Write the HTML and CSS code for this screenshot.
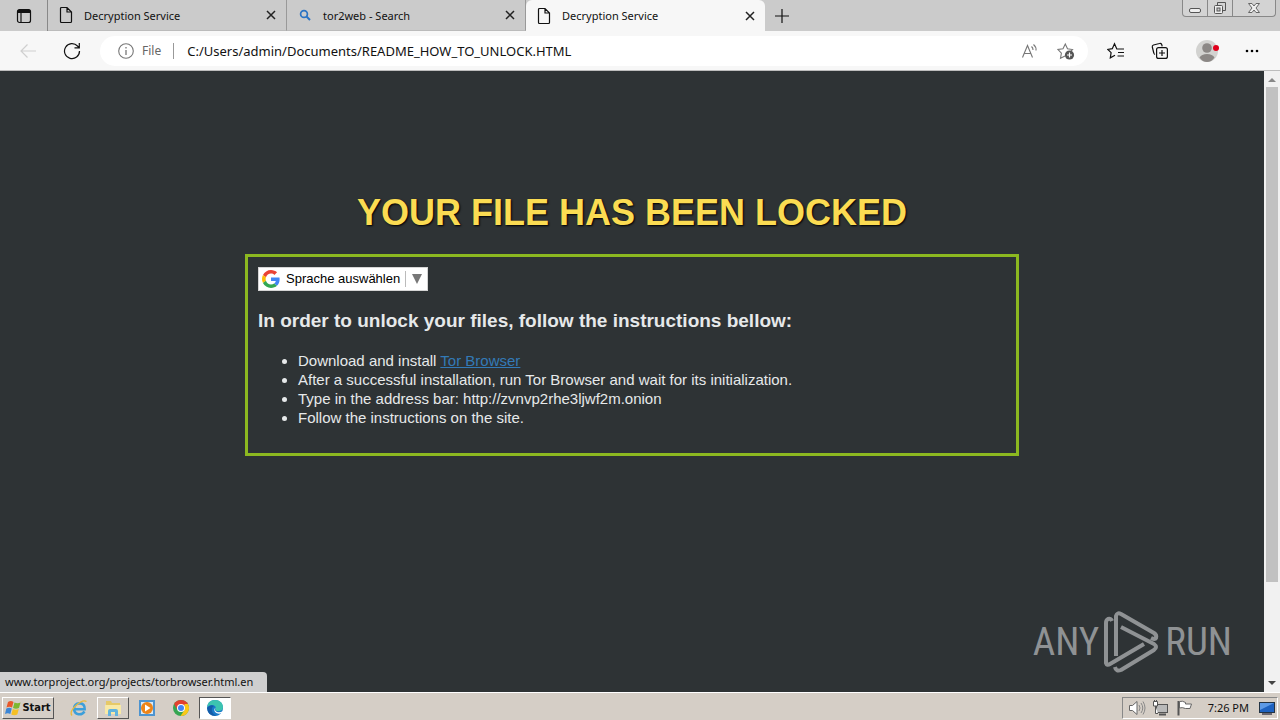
FILE: index.html
```html
<!DOCTYPE html>
<html lang="en">
<head>
<meta charset="utf-8">
<title>Decryption Service</title>
<link rel="stylesheet" href="styles.css">
</head>
<body>
<header class="tabstrip">
  <button class="tab-actions" aria-label="Tab actions">
    <svg width="16" height="16" viewBox="0 0 16 16"><rect x="1.500" y="1.500" width="13" height="13" rx="2" fill="none" stroke="#111" stroke-width="1.200"/><path d="M1.500 5V3.500a2 2 0 0 1 2-2h9a2 2 0 0 1 2 2V5z" fill="#111"/><path d="M5 5v9.500" stroke="#111" stroke-width="1.200"/></svg>
  </button>
  <div class="tab">
    <svg class="tab-icon" width="14" height="18" viewBox="0 0 14 18"><path d="M1.500 2.500a1 1 0 0 1 1-1H8L12.500 6v9.500a1 1 0 0 1-1 1h-9a1 1 0 0 1-1-1zM8 1.500V6h4.500" fill="none" stroke="#111" stroke-width="1.200"/></svg>
    <span class="tab-title">Decryption Service</span>
    <button class="close" aria-label="Close tab"><svg width="10" height="10" viewBox="0 0 10 10"><path d="M1 1l8 8M9 1L1 9" stroke="#222" stroke-width="1.500"/></svg></button>
  </div>
  <div class="tab">
    <svg class="tab-icon" width="14" height="18" viewBox="0 0 14 18"><circle cx="6" cy="8" r="3.400" fill="none" stroke="#2a73c4" stroke-width="1.700"/><path d="M8.500 10.500l3.500 3.500" stroke="#2a73c4" stroke-width="2"/></svg>
    <span class="tab-title">tor2web - Search</span>
    <button class="close" aria-label="Close tab"><svg width="10" height="10" viewBox="0 0 10 10"><path d="M1 1l8 8M9 1L1 9" stroke="#222" stroke-width="1.500"/></svg></button>
  </div>
  <div class="tab active">
    <svg class="tab-icon" width="14" height="18" viewBox="0 0 14 18"><path d="M1.500 2.500a1 1 0 0 1 1-1H8L12.500 6v9.500a1 1 0 0 1-1 1h-9a1 1 0 0 1-1-1zM8 1.500V6h4.500" fill="none" stroke="#111" stroke-width="1.200"/></svg>
    <span class="tab-title">Decryption Service</span>
    <button class="close" aria-label="Close tab"><svg width="10" height="10" viewBox="0 0 10 10"><path d="M1 1l8 8M9 1L1 9" stroke="#222" stroke-width="1.500"/></svg></button>
  </div>
  <button class="new-tab" aria-label="New tab"><svg width="14" height="14" viewBox="0 0 14 14"><path d="M7 0v14M0 7h14" stroke="#111" stroke-width="1.200"/></svg></button>
  <div class="window-controls">
    <button aria-label="Minimize"><svg width="14" height="14" viewBox="0 0 14 14"><rect x="1.500" y="7.500" width="11" height="4" rx="1.500" fill="#eee" stroke="#555"/></svg></button>
    <button aria-label="Restore"><svg width="14" height="14" viewBox="0 0 14 14"><path d="M4.500 4V1.500h8v8H10" fill="none" stroke="#555"/><rect x="1.500" y="4.500" width="8" height="8" rx="1" fill="#eee" stroke="#555"/><rect x="4" y="7" width="3" height="3" fill="#ccc" stroke="#555"/></svg></button>
    <button class="wide" aria-label="Close"><svg width="14" height="14" viewBox="0 0 14 14"><path d="M1.500 2.500h3.500L7 5l2-2.500h3.500L9 7l3.500 4.500H9L7 9l-2 2.500H1.500L5 7z" fill="#eee" stroke="#666"/></svg></button>
  </div>
</header>
<nav class="toolbar">
  <button class="back" aria-label="Back"><svg width="18" height="16" viewBox="0 0 18 16"><path d="M17 8H2M8.500 1.500L2 8l6.500 6.500" fill="none" stroke="#cfcfcf" stroke-width="1.200"/></svg></button>
  <button class="reload" aria-label="Reload"><svg width="18" height="18" viewBox="0 0 18 18"><path d="M16.500 9A7.500 7.500 0 1 1 14.500 4L16 5.500M16.300 1v4.800h-4.800" fill="none" stroke="#111" stroke-width="1.200"/></svg></button>
  <div class="address">
    <svg width="16" height="16" viewBox="0 0 16 16"><circle cx="8" cy="8" r="7.300" fill="none" stroke="#777" stroke-width="1.100"/><path d="M8 7v5M8 4v1.500" stroke="#777" stroke-width="1.300"/></svg>
    <label class="scheme" for="url">File</label>
    <input class="url" id="url" type="text" value="C:/Users/admin/Documents/README_HOW_TO_UNLOCK.HTML">
    <button class="read-aloud" aria-label="Read aloud"><svg width="18" height="18" viewBox="0 0 18 18"><path d="M1.500 15.500L6.500 3.500l5 12M3.300 11.500h6.500M10.500 4.500q1.700 1.500 1.500 3.500M12.500 2.500q3 2.500 2.500 6" fill="none" stroke="#777" stroke-width="1.100"/></svg></button>
    <button aria-label="Add to favorites"><svg width="18" height="18" viewBox="0 0 18 18"><path d="M8 14l-4.500 2.200.9-5L1 7.500l5-.8L8.300 2l2.200 4.700 5 .8-1.500 1.500" fill="none" stroke="#777" stroke-width="1.100"/><circle cx="12.500" cy="13" r="4.600" fill="#555"/><path d="M12.500 10.500v5M10 13h5" stroke="#fff" stroke-width="1.200"/></svg></button>
  </div>
  <div class="tools">
    <button aria-label="Favorites"><svg width="18" height="18" viewBox="0 0 18 18"><path d="M17 7H9.800L7.500 1.800 5.300 6.700l-4.500.7 3.300 3.300-.8 5.100L8 13.300M11 10.500h6M10.500 14H17" fill="none" stroke="#111" stroke-width="1.200"/></svg></button>
    <button aria-label="Collections"><svg width="18" height="18" viewBox="0 0 18 18"><path d="M4 12.500Q3 12 2.800 11L1.300 5Q1 3.500 2.500 3L8.500 1.500Q10 1 10.700 2.500L11.200 4.300" fill="none" stroke="#111" stroke-width="1.200"/><rect x="5.600" y="5.600" width="10.800" height="10.800" rx="2" fill="none" stroke="#111" stroke-width="1.200"/><path d="M11 8v6M8 11h6" stroke="#111" stroke-width="1.200"/></svg></button>
    <button aria-label="Profile"><svg width="24" height="24" viewBox="0 0 24 24"><circle cx="12" cy="12" r="11" fill="#d2d2d0"/><circle cx="12" cy="9" r="4.800" fill="#8b8785"/><path d="M4.500 18.500q2-3.500 7.500-3.500t7.500 3.500q-3 4.500-7.500 4.500t-7.500-4.500z" fill="#8b8785"/><circle cx="21" cy="9" r="3" fill="#e0001b"/></svg></button>
    <button aria-label="Settings and more"><svg width="14" height="4" viewBox="0 0 14 4"><circle cx="2" cy="2" r="1.300"/><circle cx="7" cy="2" r="1.300"/><circle cx="12" cy="2" r="1.300"/></svg></button>
  </div>
</nav>
<div class="viewport">
  <main class="page">
    <h1 class="headline">YOUR FILE HAS BEEN LOCKED</h1>
    <section class="panel">
      <div class="translate">
        <svg width="18" height="18" viewBox="0 0 48 48"><path fill="#ea4335" d="M24 9.500c3.500 0 6.700 1.200 9.200 3.600l6.900-6.900C35.900 2.400 30.500 0 24 0 14.600 0 6.500 5.400 2.600 13.200l8 6.200C12.400 13.700 17.700 9.500 24 9.500z"/><path fill="#4285f4" d="M47 24.600c0-1.600-.2-3.100-.4-4.600H24v9h12.900c-.6 3-2.200 5.500-4.700 7.200l7.700 6C44.400 38 47 32 47 24.600z"/><path fill="#fbbc05" d="M10.500 28.600c-.5-1.500-.8-3-.8-4.600s.3-3.100.8-4.600l-8-6.200C.9 16.500 0 20.100 0 24s.9 7.500 2.600 10.800z"/><path fill="#34a853" d="M24 48c6.500 0 11.900-2.100 15.900-5.800l-7.700-6c-2.200 1.500-4.900 2.300-8.200 2.300-6.300 0-11.600-4.200-13.500-9.900l-8 6.200C6.500 42.600 14.600 48 24 48z"/></svg>
        <select class="language" aria-label="Sprache auswählen"><option>Sprache auswählen</option></select>
        <span class="arrow"><svg width="10" height="10" viewBox="0 0 10 10"><path d="M0 0h10L5 10z" fill="#777"/></svg></span>
      </div>
      <h3 class="lead">In order to unlock your files, follow the instructions bellow:</h3>
      <ul class="steps">
        <li>Download and install <a href="#">Tor Browser</a></li>
        <li>After a successful installation, run Tor Browser and wait for its initialization.</li>
        <li>Type in the address bar: http://zvnvp2rhe3ljwf2m.onion</li>
        <li>Follow the instructions on the site.</li>
      </ul>
    </section>
  </main>
  <div class="scrollbar">
    <svg width="8" height="4" viewBox="0 0 8 4"><path d="M0 4h8L4 0z" fill="#888"/></svg>
    <div class="track"><div class="thumb"></div></div>
    <svg width="8" height="4" viewBox="0 0 8 4"><path d="M0 0h8L4 4z" fill="#444"/></svg>
  </div>
  <div class="status">www.torproject.org/projects/torbrowser.html.en</div>
  <div class="watermark">
    <span>ANY</span>
    <svg width="56" height="64" viewBox="0 0 56 64"><g fill="none" stroke="#8f9294" stroke-width="4" stroke-linejoin="round"><path d="M8 11Q7 8 4 9 2 10 2 13V53Q3 56 6 54L40 34"/><path d="M12 46V6Q13 2 17 4L50 23Q53 25 52 28 51 30 47 28"/><path d="M17 17L50 34Q54 37 50 40L17 60Q12 62 11 57"/></g></svg>
    <span>RUN</span>
  </div>
</div>
<footer class="taskbar">
  <button class="start"><svg width="17" height="16" viewBox="0 0 17 16"><path d="M3 2q3-2 5.500 0L7 7.500Q4.500 6 1.500 7.500z" fill="#e8582a"/><path d="M9.500 2.500q3 1.500 6 0L14 8q-3 1.500-6 0z" fill="#7db72f"/><path d="M1.300 8.500q3-1.500 5.500 0L5.300 14q-2.500-1.500-5.300 0z" fill="#3c86d6"/><path d="M7.800 9q3 1.500 6 0l-1.500 5.500q-3 1.500-6 0z" fill="#f5c024"/></svg>Start</button>
  <div class="apps">
    <button aria-label="Internet Explorer"><svg width="18" height="18" viewBox="0 0 18 18"><path d="M14.500 12.500Q12 16 8.500 15.200 4 14.500 4 9.800 4.200 4.500 9.500 4.200q5.500.3 5.200 6H5" fill="none" stroke="#3c9fda" stroke-width="2.500"/><path d="M2 16.500Q-1 13 6 6.500T16.500 2.500" fill="none" stroke="#e9b93c" stroke-width="1.300"/></svg></button>
    <button class="raised" aria-label="Explorer"><svg width="18" height="18" viewBox="0 0 18 18"><path d="M2 2h5l1 2h8v11H2z" fill="#e6c968"/><path d="M1 6h16v9H1z" fill="#f8e9a6"/><path d="M4 17v-5q0-2 2-2h6q2 0 2 2v5h-3v-4H7v4z" fill="#62b3dd"/></svg></button>
    <button aria-label="Media Player"><svg width="18" height="18" viewBox="0 0 18 18"><rect x="1" y="1" width="16" height="16" fill="#4d94d0"/><rect x="3" y="3" width="12" height="12" fill="#d9eaf7"/><circle cx="9" cy="9" r="6" fill="#ed8418"/><path d="M7 5.500L12.500 9 7 12.500z" fill="#fff"/></svg></button>
    <button aria-label="Chrome"><svg width="18" height="18" viewBox="0 0 18 18"><circle cx="9" cy="9" r="8" fill="#35a552"/><path d="M2.100 5A8 8 0 0 1 15.900 5L9 9 5.500 11z" fill="#e2402f"/><path d="M15.900 5A8 8 0 0 1 8.500 17L12.500 11V5z" fill="#fbc817"/><circle cx="9" cy="9" r="4" fill="#fff"/><circle cx="9" cy="9" r="3" fill="#4285f4"/></svg></button>
    <button class="pressed" aria-label="Edge"><svg width="18" height="18" viewBox="0 0 18 18"><circle cx="9" cy="9" r="8" fill="#1879c9"/><path d="M1.200 8Q2 1 9 1q7.500.3 8 7 0 4-4.500 4-3.500 0-3-2 1-1.500-.5-3Q5.500 4.500 1.200 8z" fill="#3cc4b0"/><path d="M1.100 9Q4 5 8 7 5 8.500 6 12t5 5Q2 17.500 1.100 9z" fill="#145ca8"/><path d="M9.500 8.500q-1.500 3 1.500 4.500 3 1 6-1l-1 2q-4 2-7-1-1.500-2.500.5-4.500z" fill="#fff"/></svg></button>
  </div>
  <div class="tray">
    <svg width="18" height="16" viewBox="0 0 18 16"><path d="M1.500 5.500h3L9 1.500v13l-4.500-4h-3z" fill="#fff" stroke="#666"/><path d="M11 5q2 3 0 6M13 3q3.500 5 0 10M15 1.500q4 6.500 0 13" fill="none" stroke="#888"/></svg>
    <svg width="18" height="16" viewBox="0 0 18 16"><rect x="4.500" y="4.500" width="11" height="8" fill="#b9b9b9" stroke="#555"/><path d="M7 14.500h7" stroke="#555" stroke-width="2"/><path d="M1.500 1.500h4V6h-4zM3.500 6v7.500H6M2.500 0v2M4.500 0v2" fill="#fff" stroke="#555"/></svg>
    <svg width="18" height="16" viewBox="0 0 18 16"><path d="M2.500 1v14.500" stroke="#555" stroke-width="2"/><path d="M3.500 1.500q3-1 6 1v1.500h6L14 8.500H9.500Q6 7 3.500 8z" fill="#fff" stroke="#666"/></svg>
    <time class="clock">7:26 PM</time>
    <svg width="16" height="14" viewBox="0 0 16 14"><rect x=".5" y="1.500" width="15" height="10" fill="#1e62c0" stroke="#234"/><path d="M1 2h14L1 9z" fill="#5d9ae6"/><path d="M3 13h10" stroke="#445" stroke-width="1.500"/></svg>
  </div>
</footer>
</body>
</html>
```

FILE: styles.css
```css
* { box-sizing: border-box; }

body {
  margin: 0;
  height: 100vh;
  display: flex;
  flex-direction: column;
  overflow: hidden;
  font-family: "Noto Sans", "Open Sans", sans-serif;
  font-size: 11px;
  color: #111;
}

button {
  display: flex;
  align-items: center;
  justify-content: center;
  padding: 0;
  border: 0;
  background: none;
  font: inherit;
  color: inherit;
}

svg { display: block; flex: none; }

/* Tab strip */
.tabstrip {
  display: flex;
  height: 31px;
  flex: none;
  background: #cbcbcb;
}
.tab-actions { width: 48px; border-right: 1px solid #888; }
.tab {
  display: flex;
  align-items: center;
  flex: 0 1 239px;
  padding: 0 10px 0 11px;
  border-right: 1px solid #999;
  border-bottom: 1px solid #bbb;
}
.tab-title { flex: 1; margin-left: 11px; white-space: nowrap; }
.tab.active {
  background: #f7f7f7;
  border: 0;
  border-radius: 6px 6px 0 0;
}
.new-tab { width: 34px; }
.window-controls {
  display: flex;
  align-self: flex-start;
  height: 17px;
  margin: 0 4px 0 auto;
  border: 1px solid #888;
  border-top: 0;
  border-radius: 0 0 4px 4px;
  background: #d3d3d3;
}
.window-controls button { width: 25px; border-right: 1px solid #888; }
.window-controls .wide { width: 42px; border-right: 0; }

/* Toolbar */
.toolbar {
  display: flex;
  align-items: center;
  height: 40px;
  flex: none;
  padding: 0 16px 0 19px;
  background: #f7f7f7;
  border-bottom: 1px solid #bdbdbd;
}
.back, .reload { width: 18px; }
.reload { margin-left: 26px; }
.address {
  display: flex;
  align-items: center;
  flex: 1;
  height: 30px;
  margin-left: 19px;
  padding: 0 13px 0 18px;
  border-radius: 15px;
  background: #fff;
}
.scheme {
  margin-left: 8px;
  padding-right: 12px;
  border-right: 1px solid #999;
  font-size: 12px;
  line-height: 16px;
  color: #666;
}
.url {
  flex: 1;
  min-width: 0;
  margin-left: 13px;
  padding: 0;
  border: 0;
  outline: 0;
  background: none;
  font: 13px "Noto Sans", "Open Sans", sans-serif;
  color: #111;
}
.read-aloud { margin-right: 18px; }
.tools {
  display: flex;
  align-items: center;
  gap: 26px;
  margin: 0 5px 0 19px;
}

/* Page */
.viewport {
  position: relative;
  display: flex;
  flex: 1;
  min-height: 0;
  background: #2e3335;
}
.page {
  flex: 1;
  padding: 121px 16px 0;
  font-family: "Liberation Sans", Arial, sans-serif;
  color: #e6e9ea;
}
.headline {
  margin: 0 0 20px;
  text-align: center;
  font-size: 36px;
  line-height: 42px;
  color: #fbdc52;
  text-shadow: 1px 1px 2px #000;
}
.panel {
  max-width: 774px;
  margin: 0 auto;
  padding: 10px 10px 26px;
  border: 3px solid #8cb820;
}
.translate {
  display: flex;
  align-items: center;
  width: fit-content;
  height: 24px;
  padding: 0 5px 0 3px;
  border: 1px solid #d5d5d5;
  background: #fff;
}
.language {
  appearance: none;
  margin-left: 6px;
  padding: 0 4px 0 0;
  border: 0;
  border-right: 1px solid #bbb;
  border-radius: 0;
  background: none;
  font: 13px/16px "Liberation Sans", Arial, sans-serif;
  color: #000;
}
.arrow { margin-left: 6px; }
.lead { margin: 18px 0; font-size: 19px; line-height: 24px; }
.steps { margin: 0; padding-left: 40px; font-size: 15px; line-height: 19px; }
.steps a { color: #337ab7; }

.scrollbar {
  display: flex;
  flex-direction: column;
  align-items: center;
  width: 16px;
  padding: 7px 0;
  background: #f1f1f1;
}
.track { flex: 1; width: 12px; padding: 5px 0; }
.thumb { height: 84%; background: #c1c1c1; }

.status {
  position: absolute;
  left: 0;
  bottom: 0;
  padding: 0 14px 0 5px;
  border-radius: 0 4px 0 0;
  background: #cfcfcf;
  line-height: 20px;
}
.watermark {
  position: absolute;
  right: 48px;
  bottom: 18px;
  display: flex;
  align-items: center;
  gap: 5px;
  font-family: "Roboto Condensed", "Open Sans Condensed", "Liberation Sans Narrow", "Liberation Sans", sans-serif;
  font-size: 39px;
  color: #8f9294;
}

/* Taskbar */
.taskbar {
  display: flex;
  align-items: center;
  height: 28px;
  flex: none;
  padding: 2px 2px 0;
  border-top: 1px solid #fff;
  background: #d5cec6;
}
.start {
  width: 52px;
  height: 22px;
  border: 1px solid;
  border-color: #fff #555 #555 #fff;
  font-family: "DejaVu Sans Condensed", "DejaVu Sans", sans-serif;
  font-weight: bold;
}
.apps { display: flex; gap: 2px; margin-left: 9px; }
.apps button { width: 32px; height: 22px; border: 1px solid transparent; }
.apps .raised { border-color: #fff #555 #555 #fff; }
.apps .pressed { border-color: #555 #fff #fff #555; background: #fff; }
.tray {
  display: flex;
  align-items: center;
  gap: 6px;
  height: 22px;
  margin-left: auto;
  padding: 0 2px 0 5px;
  border: 1px solid;
  border-color: #888 #fff #fff #888;
}
.clock { margin: 0 4px 0 8px; }
```
